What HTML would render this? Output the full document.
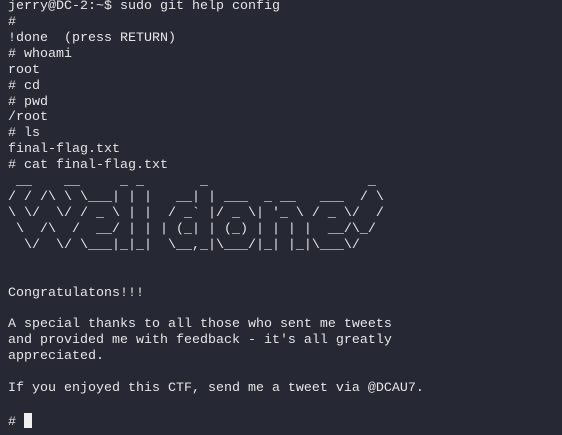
<!DOCTYPE html>
<html><head><style>
html,body{margin:0;padding:0;background:#262834;width:562px;height:435px;overflow:hidden}
pre{margin:-1px 0 0 0;padding:0 0 0 8px;font-family:"Liberation Mono","DejaVu Sans Mono",monospace;font-size:13.33px;line-height:15.92px;color:#e6e6e6;white-space:pre}
.c{display:inline-block;width:8px;height:15px;background:#f0f0f0;vertical-align:-3px}
</style></head><body>
<pre>jerry@DC-2:~$ sudo git help config
#
!done  (press RETURN)
# whoami
root
# cd
# pwd
/root
# ls
final-flag.txt
# cat final-flag.txt
 __    __     _ _       _                    _ 
/ / /\ \ \___| | |   __| | ___  _ __   ___  / \
\ \/  \/ / _ \ | |  / _` |/ _ \| '_ \ / _ \/  /
 \  /\  /  __/ | | | (_| | (_) | | | |  __/\_/ 
  \/  \/ \___|_|_|  \__,_|\___/|_| |_|\___\/   


Congratulatons!!!

A special thanks to all those who sent me tweets
and provided me with feedback - it's all greatly
appreciated.

If you enjoyed this CTF, send me a tweet via @DCAU7.

# <span class="c"></span></pre>
</body></html>
